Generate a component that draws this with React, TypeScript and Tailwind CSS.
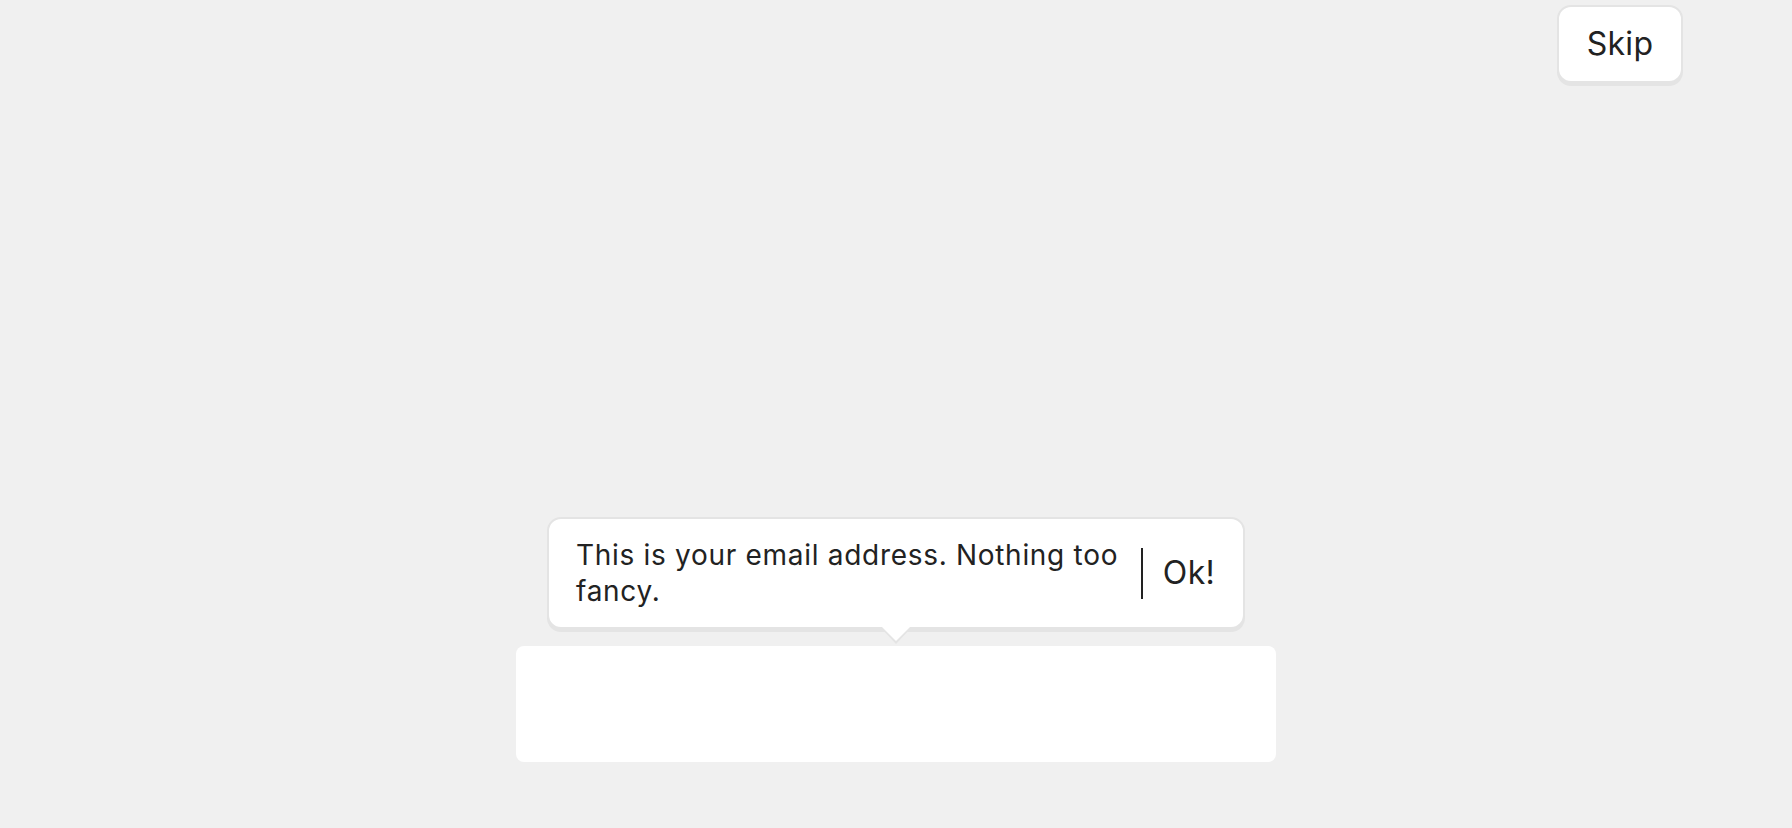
import React from 'react';

export default function App() {
  return (
    <div
      className="h-[828px] w-full bg-[#f0f0f0] flex flex-col text-[#222222]"
      style={{ fontFamily: 'Inter, "Noto Sans", sans-serif' }}
    >
      {/* TOP BAR */}
      <div className="flex justify-end pt-[5px] pr-[109px]">
        <button className="w-[126px] h-[78px] rounded-[14px] bg-white border-2 border-[#e4e4e4] shadow-[0_3px_0_#e4e4e4] text-[32px] tracking-[0.3px] flex items-center justify-center">
          Skip
        </button>
      </div>

      {/* HINT + FIELD */}
      <div className="flex-1 flex flex-col items-center justify-end pb-[66px]">
        <div className="relative w-[698px] rounded-[14px] bg-white border-2 border-[#e4e4e4] shadow-[0_3px_0_#e4e4e4] pl-[27px] pr-[28px] py-[18px] flex items-center">
          <p className="flex-1 text-[28px] leading-[36px] tracking-[0.7px]">
            This is your email address. Nothing too fancy.
          </p>
          <div className="w-[2px] h-[51px] bg-[#222222] mx-[20px]" />
          <button className="text-[32px] leading-none tracking-[0.3px]">Ok!</button>
          <div className="absolute left-1/2 -bottom-[17px] -translate-x-1/2 w-0 h-0 border-l-[16px] border-r-[16px] border-t-[17px] border-l-transparent border-r-transparent border-t-[#e4e4e4]" />
          <div className="absolute left-1/2 -bottom-[14px] -translate-x-1/2 w-0 h-0 border-l-[15px] border-r-[15px] border-t-[15px] border-l-transparent border-r-transparent border-t-white" />
        </div>
        <div className="mt-[17px] w-[760px] h-[116px] rounded-[8px] bg-white" />
      </div>
    </div>
  );
}
